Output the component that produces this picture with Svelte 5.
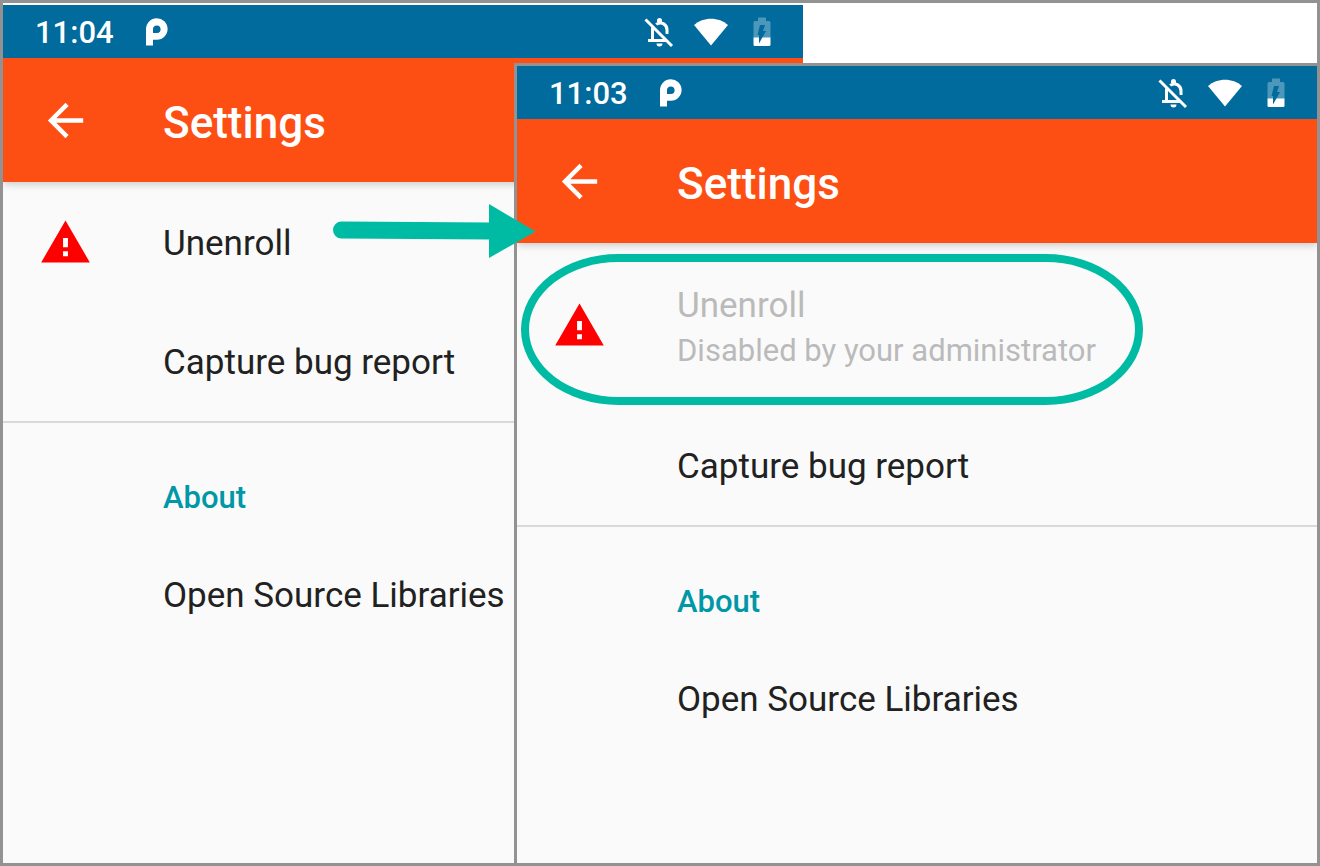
<script>
	const screens = [
		{
			name: 'back',
			time: '11:04',
			items: [
				{title: 'Unenroll', warning: true},
				{title: 'Capture bug report'}
			]
		},
		{
			name: 'front',
			time: '11:03',
			items: [
				{title: 'Unenroll', summary: 'Disabled by your administrator', warning: true, disabled: true},
				{title: 'Capture bug report'}
			]
		}
	]
</script>

<main class="frame">
	{#each screens as screen}
		<section class="screen {screen.name}" aria-label="Settings at {screen.time}">
			<div class="status">
				<span class="time">{screen.time}</span>
				<svg class="brand" width="22" height="28" viewBox="0 0 22 28">
					<path fill="#fff" fill-rule="evenodd" d="M0 27.500V11A10.800 10.800 0 1 1 11 21.800H7V27.500ZM7 15H11A3.800 3.800 0 1 0 7 11Z"/>
					<circle cx="11" cy="11" r="1.500" fill="#006b9c"/>
				</svg>
				<svg class="bell" width="30" height="30" viewBox="0 0 30 30" fill="none" stroke="#fff">
					<path stroke-width="3" d="M8.500 10.500V23.500M4 23.500H23M12 7.500C18 3.500 23 8 23 13V17"/>
					<path fill="#fff" stroke="none" d="M13 5V3.500a2.500 2.500 0 0 1 5 0V5ZM12.500 26.500h6a3 3 0 0 1-6 0Z"/>
					<path stroke="#006b9c" stroke-width="2" d="M3.500 .5L30.500 27"/>
					<path stroke-width="3" d="M1.500 2.500L28 29"/>
				</svg>
				<svg class="wifi" width="34" height="28" viewBox="0 0 34 28">
					<path fill="#fff" d="M0 7C9 -1.500 25 -1.500 34 7L17 27.500Z"/>
				</svg>
				<svg class="battery" width="18" height="30" viewBox="0 0 18 30">
					<path fill="#4c97ba" d="M5 0.500h8V4h3q1.500 0 1.500 1.500V21H.5V5.500Q.5 4 2 4h3Z"/>
					<path fill="#fff" d="M.5 20.500h17v7q0 1.500-1.500 1.500H2q-1.500 0-1.500-1.500Z"/>
					<path fill="#006b9c" d="M7 8h5l-2 6h3L6 26.500V18H4.500Z"/>
				</svg>
			</div>

			<header class="appbar">
				<button class="up" aria-label="Back">
					<svg width="53" height="53" viewBox="0 0 24 24">
						<path fill="#fff" d="M20 11H7.830l5.590-5.590L12 4l-8 8 8 8 1.410-1.410L7.830 13H20z"/>
					</svg>
				</button>
				<h1>Settings</h1>
			</header>

			<div class="list">
				{#each screen.items as item}
					<div class="entry">
						<button class="row" class:tall={item.summary} disabled={item.disabled}>
							<span class="icon">
								{#if item.warning}
									<svg width="53" height="53" viewBox="0 0 24 24">
										<path fill="#f00" d="M1 21h22L12 2z"/>
										<path fill="#fff" d="M10.900 10h2.200v4.200h-2.200zM10.900 16h2.200v2.200h-2.200z"/>
									</svg>
								{/if}
							</span>
							<span class="label">
								<span class="title">{item.title}</span>
								{#if item.summary}
									<span class="summary">{item.summary}</span>
								{/if}
							</span>
						</button>
						{#if item.disabled}
							<div class="ring"></div>
						{/if}
					</div>
				{/each}
				<hr>
				<h2>About</h2>
				<button class="row">
					<span class="icon"></span>
					<span class="label"><span class="title">Open Source Libraries</span></span>
				</button>
			</div>

			{#if screen.name === 'front'}
				<svg class="pointer" width="204" height="56" viewBox="0 0 204 56">
					<path stroke="#00bba3" stroke-width="17" stroke-linecap="round" d="M9.500 27L160 28"/>
					<path fill="#00bba3" d="M157 1L203.500 28.500L157 55Z"/>
				</svg>
			{/if}
		</section>
	{/each}
</main>

<style>
	:global(body) {
		margin: 0;
		background: #fff;
	}

	.frame {
		display: grid;
		grid-template-columns: 511fr 289fr 514fr;
		box-sizing: border-box;
		min-height: 100vh;
		border: 3px solid #929292;
		font-family: Roboto, sans-serif;
		color: #212121;
	}

	.screen {
		position: relative;
		grid-row: 1;
		min-width: 0;
		background: #fafafa;
	}

	.back {
		grid-column: 1 / 3;
		margin-top: 2px;
	}

	.front {
		grid-column: 2 / 4;
		margin-top: 60px;
		border-top: 3px solid #929292;
		border-left: 3px solid #929292;
	}

	.status {
		display: flex;
		align-items: center;
		box-sizing: border-box;
		height: 53px;
		padding: 0 32px;
		background: #006b9c;
		color: #fff;
	}

	.time {
		padding-top: 3px;
		font-size: 31px;
		font-weight: 500;
		line-height: 50px;
	}

	.brand {
		margin-left: 32px;
	}

	.bell {
		margin-left: auto;
	}

	.wifi {
		margin-left: 20px;
	}

	.battery {
		margin-left: 25px;
	}

	.appbar {
		position: relative;
		display: grid;
		grid-template-columns: 160px 1fr;
		align-items: center;
		height: 124px;
		background: #fd4f14;
		box-shadow: 0 2px 8px rgba(0, 0, 0, 0.2);
		clip-path: inset(0 0 -12px 0);
		color: #fff;
	}

	.up {
		display: flex;
		padding: 0 0 0 36px;
		border: 0;
		background: none;
	}

	h1 {
		margin: 0;
		padding-top: 6px;
		font-size: 44px;
		font-weight: 500;
		line-height: 52px;
	}

	.list {
		padding-top: 1px;
	}

	.entry {
		position: relative;
	}

	.row {
		display: grid;
		grid-template-columns: 160px 1fr;
		align-items: center;
		width: 100%;
		height: 119px;
		padding: 0;
		border: 0;
		background: none;
		color: inherit;
		font: inherit;
		text-align: left;
	}

	.row.tall {
		height: 162px;
	}

	.row:disabled .label {
		color: #bababa;
	}

	.icon {
		display: flex;
		padding-left: 36px;
	}

	.label {
		display: flex;
		flex-direction: column;
		padding-top: 3px;
		white-space: nowrap;
	}

	.title {
		font-size: 35px;
		line-height: 48px;
	}

	.summary {
		font-size: 31px;
		line-height: 42px;
	}

	hr {
		height: 2px;
		margin: 0;
		border: 0;
		background: #dadada;
	}

	h2 {
		margin: 0;
		padding: 54px 0 16px 160px;
		color: #0097a7;
		font-size: 31px;
		font-weight: 500;
		line-height: 42px;
	}

	.ring {
		position: absolute;
		top: 10px;
		right: 174px;
		bottom: 1px;
		left: 4px;
		border: 8px solid #00bba3;
		border-radius: 98px / 76px;
		pointer-events: none;
	}

	.pointer {
		position: absolute;
		top: 137px;
		left: -185px;
	}
</style>
